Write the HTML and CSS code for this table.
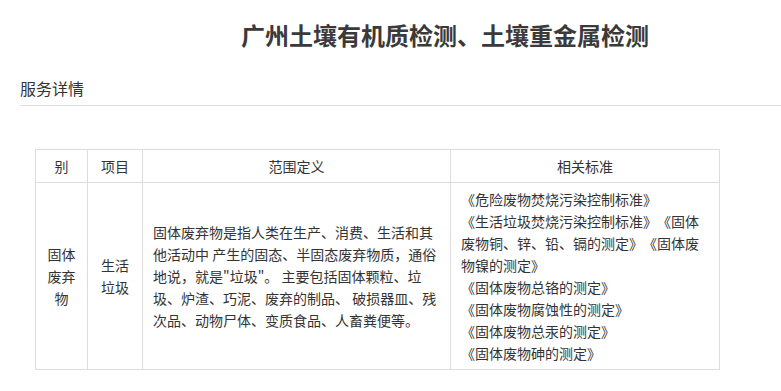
FILE: index.html
```html
<!DOCTYPE html>
<html lang="zh">
<head>
<meta charset="utf-8">
<link rel="stylesheet" href="styles.css">
</head>
<body>
<h1 class="title">广州土壤有机质检测、土壤重金属检测</h1>
<div class="section-head">服务详情</div>
<table class="spec">
  <colgroup>
    <col class="c1"><col class="c2"><col class="c3"><col class="c4">
  </colgroup>
  <thead>
    <tr><th>别</th><th>项目</th><th>范围定义</th><th>相关标准</th></tr>
  </thead>
  <tbody>
    <tr>
      <td class="center">固体废弃物</td>
      <td class="center">生活垃圾</td>
      <td class="def">固体废弃物是指人类在生产、消费、生活和其他活动中 产生的固态、半固态废弃物质，通俗地说，就是"垃圾"。 主要包括固体颗粒、垃圾、炉渣、巧泥、废弃的制品、 破损器皿、残次品、动物尸体、变质食品、人畜粪便等。</td>
      <td class="std">《危险废物焚烧污染控制标准》<br>《生活垃圾焚烧污染控制标准》《固体废物铜、锌、铅、镉的测定》《固体废物镍的测定》<br>《固体废物总铬的测定》<br>《固体废物腐蚀性的测定》<br>《固体废物总汞的测定》<br>《固体废物砷的测定》</td>
    </tr>
  </tbody>
</table>
</body>
</html>
```
FILE: styles.css
```css
body {
  margin: 0;
  font-family: "Noto Sans CJK SC", "Microsoft YaHei", sans-serif;
  color: #333;
  background: #fff;
  text-spacing-trim: space-all;
}
.title {
  margin: 17px 0 0 241px;
  font-size: 24px;
  line-height: 36px;
  font-weight: bold;
  color: #3a3a3a;
}
.section-head {
  margin: 23px 0 0 20px;
  padding-bottom: 5px;
  font-size: 16px;
  line-height: 24px;
  border-bottom: 1px solid #ddd;
}
.spec {
  margin: 43px 0 0 35px;
  border-collapse: collapse;
  table-layout: fixed;
  width: 684px;
  font-size: 14px;
  line-height: 22px;
  color: #333;
}
.c1 { width: 52px; }
.c2 { width: 55px; }
.c3 { width: 308px; }
.c4 { width: 269px; }
.spec th, .spec td {
  border: 1px solid #ddd;
  padding: 5px 10px;
  vertical-align: middle;
}
.spec th {
  font-weight: normal;
  height: 22px;
  text-align: center;
}
.center { text-align: center; }
.def { text-align: left; }
.std { text-align: left; }
```
